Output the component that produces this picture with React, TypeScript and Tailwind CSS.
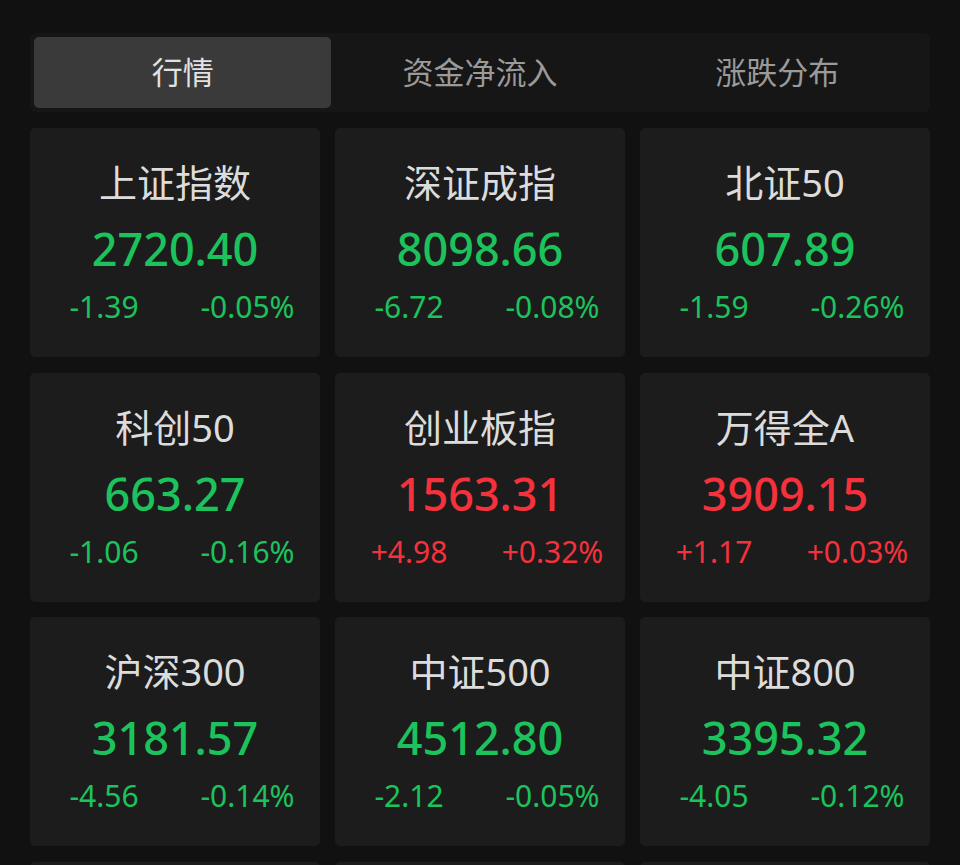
import React from "react";

type Item = { name: string; value: string; chg: string; pct: string; up: boolean };

const items: Item[] = [
  { name: "上证指数", value: "2720.40", chg: "-1.39", pct: "-0.05%", up: false },
  { name: "深证成指", value: "8098.66", chg: "-6.72", pct: "-0.08%", up: false },
  { name: "北证50", value: "607.89", chg: "-1.59", pct: "-0.26%", up: false },
  { name: "科创50", value: "663.27", chg: "-1.06", pct: "-0.16%", up: false },
  { name: "创业板指", value: "1563.31", chg: "+4.98", pct: "+0.32%", up: true },
  { name: "万得全A", value: "3909.15", chg: "+1.17", pct: "+0.03%", up: true },
  { name: "沪深300", value: "3181.57", chg: "-4.56", pct: "-0.14%", up: false },
  { name: "中证500", value: "4512.80", chg: "-2.12", pct: "-0.05%", up: false },
  { name: "中证800", value: "3395.32", chg: "-4.05", pct: "-0.12%", up: false },
];

function Card({ it }: { it: Item }) {
  const color = it.up ? "text-[#f5313c]" : "text-[#1cc35c]";
  return (
    <div className="h-[229px] rounded-[5px] bg-[#1c1c1c] flex flex-col pt-[32px]">
      <div className="text-center text-[38px] leading-[44px] text-[#dcdcdc]">{it.name}</div>
      <div className={`mt-[17px] text-center text-[45px] leading-[56px] font-medium ${color}`}>{it.value}</div>
      <div className={`mt-[10px] grid grid-cols-2 text-[30px] leading-[40px] ${color}`}>
        <div className="text-center pl-[3px]">{it.chg}</div>
        <div className="text-center">{it.pct}</div>
      </div>
    </div>
  );
}

export default function App() {
  const tabs = ["行情", "资金净流入", "涨跌分布"];
  return (
    <div
      className="w-[960px] h-[865px] overflow-hidden bg-[#111111] px-[30px] pt-[33px]"
      style={{ fontFamily: '"Noto Sans", "Noto Sans CJK SC", sans-serif' }}
    >
      <div className="h-[79px] rounded-[6px] bg-[#161616] p-[4px] grid grid-cols-3">
        {tabs.map((t, i) => (
          <div
            key={t}
            className={`flex items-center justify-center rounded-[5px] text-[31px] ${
              i === 0 ? "bg-[#3a3a3a] text-[#e2e2e2]" : "text-[#9a9a9a]"
            }`}
          >
            {t}
          </div>
        ))}
      </div>
      <div className="mt-[16px] grid grid-cols-3 gap-x-[15px] gap-y-[15.5px]">
        {items.map((it) => (
          <Card key={it.name} it={it} />
        ))}
        <div className="h-[229px] rounded-[5px] bg-[#1c1c1c]" />
        <div className="h-[229px] rounded-[5px] bg-[#1c1c1c]" />
        <div className="h-[229px] rounded-[5px] bg-[#1c1c1c]" />
      </div>
    </div>
  );
}
